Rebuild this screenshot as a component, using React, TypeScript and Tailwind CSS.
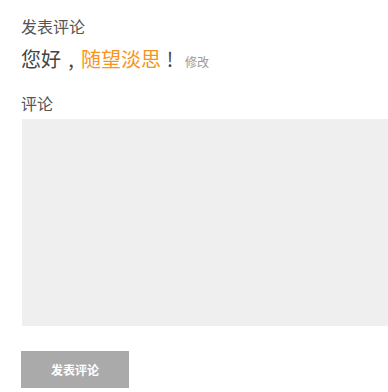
export default function App() {
  return (
    <div
      className="w-[388px] h-[392px] overflow-hidden bg-white pl-[21px] pt-[14px]"
      style={{ fontFamily: '"Noto Sans CJK SC", "Noto Sans", sans-serif' }}
    >
      <div className="text-[16px] leading-[24px] text-[#555]">发表评论</div>
      <div className="mt-[6px] flex items-baseline leading-[30px]">
        <span className="text-[20px] text-[#444]">您好</span>
        <span className="inline-block w-[20px] text-center text-[20px] text-[#444]">,</span>
        <span className="text-[20px] text-[#f7941d]">随望淡思</span>
        <span className="inline-block w-[18px] text-center text-[20px] text-[#444]">!</span>
        <span className="ml-[6px] text-[12px] text-[#999]">修改</span>
      </div>
      <div className="mt-[14px] text-[16px] leading-[24px] text-[#555]">评论</div>
      <div className="mt-[4px] ml-[1px] h-[207px] w-[380px] bg-[#efefef]" />
      <button className="mt-[25px] flex h-[37px] w-[108px] items-center justify-center bg-[#aaaaaa] text-[12px] font-bold text-white">
        发表评论
      </button>
    </div>
  );
}
